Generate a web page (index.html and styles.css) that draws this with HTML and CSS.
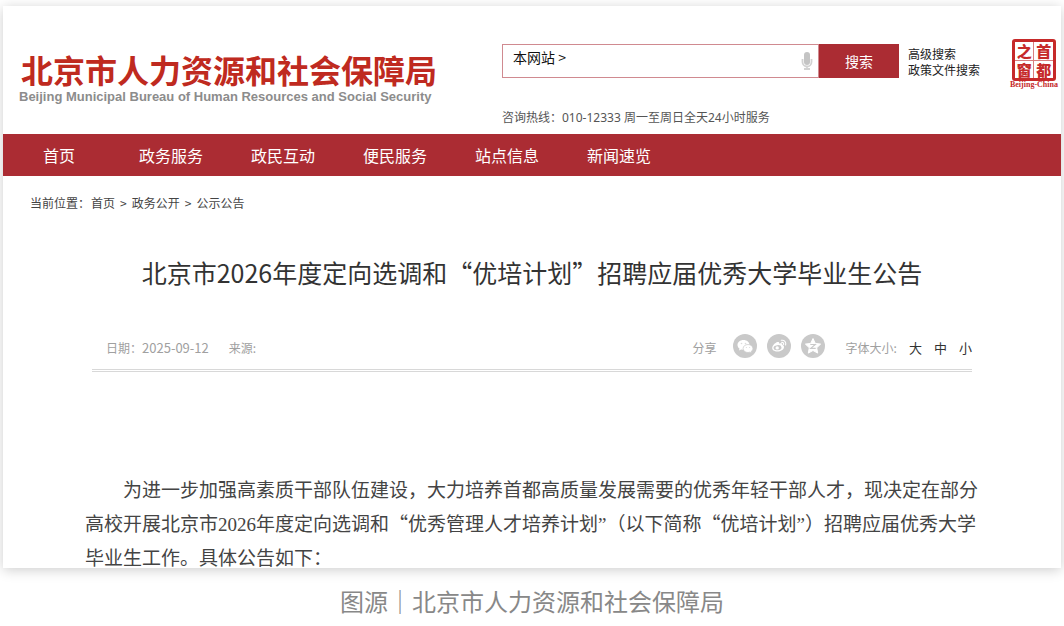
FILE: index.html
```
<!DOCTYPE html>
<html lang="zh-CN">
  <head>
    <meta charset="UTF-8" />
    <title>北京市人力资源和社会保障局</title>
    <link rel="stylesheet" href="styles.css">
  </head>
  <body>
    <div class="wrap">
      <div class="header">
        <a href="#" class="logo">
          <span class="logo-cn">北京市人力资源和社会保障局</span>
          <span class="logo-en">Beijing Municipal Bureau of Human Resources and Social Security</span>
        </a>
        <div class="tools">
          <form class="search">
            <div class="search-box">
              <button type="button" class="scope">本网站 &gt;</button>
              <input type="text" class="keyword" aria-label="搜索内容" />
              <button type="button" class="mic" aria-label="语音">
                <svg width="12" height="20" viewBox="0 0 12 20">
                  <rect x="3" y="1" width="6" height="13" rx="3" fill="#c4c4c4" />
                  <path d="M1.500 8v3a4.500 4.500 0 0 0 9 0V8M6 16v2M3 18h6" fill="none" stroke="#d2d2d2" stroke-width="1.800" />
                </svg>
              </button>
            </div>
            <button type="button" class="btn">搜索</button>
            <div class="more">
              <a href="#">高级搜索</a>
              <a href="#">政策文件搜索</a>
            </div>
          </form>
          <p class="hotline">咨询热线：010-12333 周一至周日全天24小时服务</p>
        </div>
        <a href="#" class="seal">
          <span class="seal-box">
            <span>之</span><span>首</span><span>窗</span><span>都</span>
          </span>
          <span class="seal-en">Beijing-China</span>
        </a>
      </div>
      <div class="nav">
        <a href="#">首页</a>
        <a href="#">政务服务</a>
        <a href="#">政民互动</a>
        <a href="#">便民服务</a>
        <a href="#">站点信息</a>
        <a href="#">新闻速览</a>
      </div>
      <div class="crumb">
        <span>当前位置：</span>
        <a href="#">首页</a>
        <span>&gt;</span>
        <a href="#">政务公开</a>
        <span>&gt;</span>
        <a href="#">公示公告</a>
      </div>
      <h1>北京市2026年度定向选调和“优培计划”招聘应届优秀大学毕业生公告</h1>
      <div class="meta">
        <span>日期：</span>
        <span class="date">2025-09-12</span>
        <span class="source">来源:</span>
        <span class="share">分享</span>
        <a href="#" class="icon" aria-label="微信">
          <svg width="24" height="24" viewBox="0 0 24 24">
            <circle cx="12" cy="12" r="12" fill="#c9c9c9" />
            <path d="M10.500 6C7 6 4.500 8.200 4.500 10.900c0 1.500.8 2.800 2 3.700L6 16.500l2.200-1.100 2.300.4c3.500 0 6-2.200 6-4.900S14 6 10.500 6z" fill="#fff" />
            <path d="M15 10.500c-2.900 0-4.900 1.800-4.900 4s2 4 4.900 4l1.700-.3 1.800.9-.4-1.500c1.100-.8 1.800-1.900 1.800-3.100 0-2.200-2-4-4.900-4z" fill="#fff" stroke="#c9c9c9" stroke-width=".7" />
            <g fill="#dcdcdc">
              <circle cx="8.500" cy="9.500" r=".8" /><circle cx="12.500" cy="9.500" r=".8" />
              <circle cx="13.400" cy="13.500" r=".6" /><circle cx="16.600" cy="13.500" r=".6" />
            </g>
          </svg>
        </a>
        <a href="#" class="icon" aria-label="微博">
          <svg width="24" height="24" viewBox="0 0 24 24">
            <circle cx="12" cy="12" r="12" fill="#c9c9c9" />
            <path d="M10.500 8c1.300-.4 2 .3 1.600 1.700 2-.8 3.700-.4 3.200 1.300 1.200.4 1.800 1.100 1.700 2.200-.3 2.500-3.200 4.300-6.600 4.300-3.200 0-5.400-1.500-5.200-3.700C5.400 11.600 8 8.700 10.500 8z" fill="#fff" />
            <ellipse cx="10.500" cy="13.700" rx="4" ry="2.600" fill="#c9c9c9" transform="rotate(-8 10.500 13.700)" />
            <circle cx="10.200" cy="13.900" r="1.700" fill="#fff" />
            <path d="M14.300 6.300c3-.6 5.200 1.700 4.300 4.700M14.700 8.400c1.400-.2 2.300.8 1.900 2.100" fill="none" stroke="#fff" stroke-width="1.100" stroke-linecap="round" />
          </svg>
        </a>
        <a href="#" class="icon" aria-label="QQ空间">
          <svg width="24" height="24" viewBox="0 0 24 24">
            <circle cx="12" cy="12" r="12" fill="#c9c9c9" />
            <path d="M12 4.500l2.300 4.900 5.300.7-3.900 3.700 1 5.300-4.700-2.600-4.700 2.600 1-5.300-3.900-3.700 5.300-.7z" fill="#fff" stroke="#fff" stroke-linejoin="round" />
            <path d="M9.300 10.500h5l-4.600 3.900h5" fill="none" stroke="#c9c9c9" stroke-width="1.100" />
          </svg>
        </a>
        <span class="size">字体大小:</span>
        <button type="button">大</button>
        <button type="button">中</button>
        <button type="button">小</button>
      </div>
      <div class="content">
        <p>为进一步加强高素质干部队伍建设，大力培养首都高质量发展需要的优秀年轻干部人才，现决定在部分高校开展北京市<span class="en">2026</span>年度定向选调和“优秀管理人才培养计划<span class="en">”</span>（以下简称“优培计划<span class="en">”</span>）招聘应届优秀大学毕业生工作。具体公告如下：</p>
      </div>
    </div>
    <p class="caption">图源｜北京市人力资源和社会保障局</p>
  </body>
</html>
```
FILE: styles.css
```
* {
  margin: 0px;
  padding: 0px;
  box-sizing: border-box;
  text-decoration: none;
}
body {
  padding: 6px 3px 0px;
  background-color: #fff;
  color: #333;
  font-family: "Noto Sans CJK SC", sans-serif;
  font-size: 12px;
  text-spacing-trim: space-all;
}
a {
  color: inherit;
}
button,
input {
  border: none;
  background: none;
  font-family: inherit;
}
button {
  cursor: pointer;
}
.wrap {
  background-color: #fff;
  box-shadow: 0px 2px 12px rgba(0, 0, 0, 0.2);
}
.header {
  display: flex;
  height: 128px;
}
.logo {
  display: flex;
  flex-direction: column;
  width: 499px;
  padding: 44px 0px 0px 16px;
  white-space: nowrap;
}
.logo-cn {
  padding-left: 2px;
  font-size: 32px;
  font-weight: bold;
  line-height: 38px;
  color: #bf2a20;
}
.logo-en {
  margin-top: 2px;
  font-family: "Liberation Sans", sans-serif;
  font-size: 13px;
  font-weight: bold;
  line-height: 14px;
  color: #8c8c8c;
}
.tools {
  padding-top: 38px;
}
.search {
  display: flex;
}
.search-box {
  display: flex;
  width: 317px;
  height: 34px;
  border: 1px solid #d08a90;
}
.scope {
  align-self: flex-start;
  padding-left: 10px;
  font-size: 14px;
  line-height: 24px;
  color: #111;
}
.keyword {
  flex: 1;
  min-width: 0px;
  outline: none;
}
.mic {
  width: 22px;
  height: 32px;
}
.mic svg {
  display: block;
  margin: 0px auto;
}
.btn {
  width: 80px;
  height: 34px;
  background-color: #ab2c33;
  color: #fff;
  font-size: 14px;
}
.more {
  display: flex;
  flex-direction: column;
  padding: 2px 0px 0px 9px;
  line-height: 16px;
  color: #222;
  white-space: nowrap;
}
.hotline {
  margin-top: 30px;
  font-family: "Noto Sans", "Noto Sans CJK SC", sans-serif;
  line-height: 20px;
  color: #555;
}
.seal {
  display: flex;
  flex-direction: column;
  align-items: center;
  margin-left: auto;
  padding: 33px 3px 0px 0px;
  color: #c62a2a;
}
.seal-box {
  display: grid;
  grid-template-columns: 1fr 1fr;
  gap: 1px;
  width: 44px;
  height: 42px;
  border: 3px solid #c62a2a;
  border-radius: 3px;
  background-color: #d98080;
}
.seal-box span {
  background-color: #fff;
  font-size: 15px;
  font-weight: 900;
  line-height: 17px;
  text-align: center;
}
.seal-en {
  font-family: "Liberation Serif", serif;
  font-size: 8px;
  font-weight: bold;
  line-height: 8px;
}
.nav {
  display: flex;
  height: 42px;
  background-color: #ab2c33;
}
.nav a {
  width: 112px;
  color: #fff;
  font-size: 16px;
  line-height: 42px;
  text-align: center;
}
.crumb {
  display: flex;
  gap: 5px;
  padding: 17px 27px 0px;
  line-height: 20px;
  color: #444;
}
.crumb span:first-child {
  margin-right: -4px;
}
h1 {
  margin-top: 39px;
  font-size: 25px;
  font-weight: normal;
  line-height: 40px;
  text-align: center;
}
.meta {
  display: flex;
  align-items: center;
  height: 52px;
  margin: 28px 89px 0px;
  padding-left: 14px;
  padding-top: 2px;
  border-bottom: 3px double #d8d8d8;
  color: #a0a0a0;
}
.meta span,
.meta button {
  padding-top: 4px;
}
.date {
  font-size: 13px;
}
.source {
  margin-left: 20px;
}
.share {
  margin-left: auto;
  margin-right: 16px;
}
.icon {
  height: 24px;
  margin-right: 10px;
}
.size {
  margin-left: 11px;
}
.meta button {
  margin-left: 12px;
  color: #333;
  font-size: 13px;
}
.content {
  display: flow-root;
  margin: 100px 82px 0px;
}
.content p {
  margin-bottom: -6px;
  color: #444;
  font-size: 19px;
  line-height: 34px;
  text-indent: 2em;
}
.en {
  font-family: "Liberation Serif", serif;
  line-height: 1;
}
.caption {
  margin-top: 16px;
  color: #888;
  font-size: 24px;
  line-height: 34px;
  text-align: center;
}
```
